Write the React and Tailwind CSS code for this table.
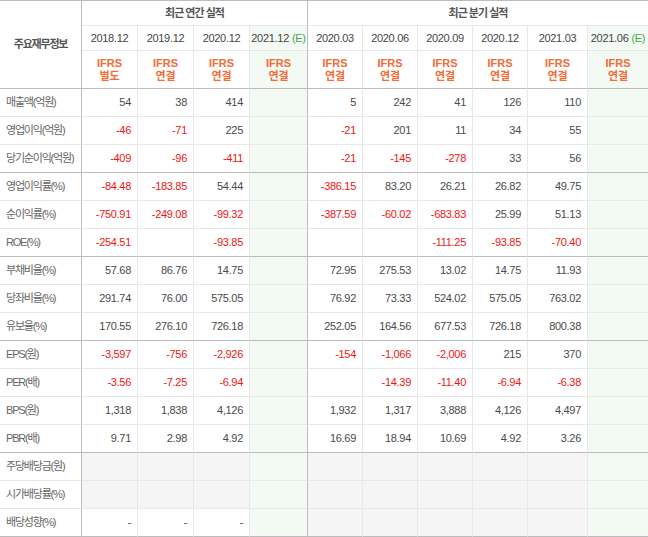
import React from 'react';

const annual = [
  { date: '2018.12', type: '별도' },
  { date: '2019.12', type: '연결' },
  { date: '2020.12', type: '연결' },
];
const quarter = ['2020.03', '2020.06', '2020.09', '2020.12', '2021.03'];

// a: 연간 3개, q: 분기 5개, end: 그룹 마지막 줄
const rows = [
  { label: '매출액(억원)', a: ['54', '38', '414'], q: ['5', '242', '41', '126', '110'] },
  { label: '영업이익(억원)', a: ['-46', '-71', '225'], q: ['-21', '201', '11', '34', '55'] },
  { label: '당기순이익(억원)', a: ['-409', '-96', '-411'], q: ['-21', '-145', '-278', '33', '56'], end: true },
  { label: '영업이익률(%)', a: ['-84.48', '-183.85', '54.44'], q: ['-386.15', '83.20', '26.21', '26.82', '49.75'] },
  { label: '순이익률(%)', a: ['-750.91', '-249.08', '-99.32'], q: ['-387.59', '-60.02', '-683.83', '25.99', '51.13'] },
  { label: 'ROE(%)', a: ['-254.51', '', '-93.85'], q: ['', '', '-111.25', '-93.85', '-70.40'], end: true },
  { label: '부채비율(%)', a: ['57.68', '86.76', '14.75'], q: ['72.95', '275.53', '13.02', '14.75', '11.93'] },
  { label: '당좌비율(%)', a: ['291.74', '76.00', '575.05'], q: ['76.92', '73.33', '524.02', '575.05', '763.02'] },
  { label: '유보율(%)', a: ['170.55', '276.10', '726.18'], q: ['252.05', '164.56', '677.53', '726.18', '800.38'], end: true },
  { label: 'EPS(원)', a: ['-3,597', '-756', '-2,926'], q: ['-154', '-1,066', '-2,006', '215', '370'] },
  { label: 'PER(배)', a: ['-3.56', '-7.25', '-6.94'], q: ['', '-14.39', '-11.40', '-6.94', '-6.38'] },
  { label: 'BPS(원)', a: ['1,318', '1,838', '4,126'], q: ['1,932', '1,317', '3,888', '4,126', '4,497'] },
  { label: 'PBR(배)', a: ['9.71', '2.98', '4.92'], q: ['16.69', '18.94', '10.69', '4.92', '3.26'], end: true },
  { label: '주당배당금(원)', a: [null, null, null], q: [null, null, null, null, null] },
  { label: '시가배당률(%)', a: [null, null, null], q: [null, null, null, null, null] },
  { label: '배당성향(%)', a: ['-', '-', '-'], q: [null, null, null, null, null], end: true },
];

const Num = ({ v, end }) => {
  const bg = v === null ? 'bg-[#f5f5f5]' : 'bg-white';
  const color = v && v.startsWith('-') && v !== '-' ? 'text-[#f01414]' : 'text-[#4a4a4a]';
  const bottom = end ? 'border-b-[#bcbcbc]' : 'border-b-[#e8e8e8]';
  return (
    <div className={`flex items-center justify-end pr-[6px] border-b border-r border-r-[#e8e8e8] tracking-[-0.3px] ${bg} ${color} ${bottom}`}>
      {v}
    </div>
  );
};

const Est = ({ end, thick }) => (
  <div
    className={`bg-[#f3f9f3] border-b ${end ? 'border-b-[#bcbcbc]' : 'border-b-[#e6ebe6]'} ${
      thick ? 'border-r border-r-[#bcbcbc]' : ''
    }`}
  />
);

const Ifrs = ({ type, thick, est, last }) => (
  <div
    className={`flex flex-col items-center justify-center leading-[13px] font-bold text-[#f26c33] border-b border-b-[#bcbcbc] ${
      last ? '' : thick ? 'border-r border-r-[#bcbcbc]' : 'border-r border-r-[#e8e8e8]'
    } ${est ? 'bg-[#f3f9f3]' : 'bg-white'}`}
  >
    <span>IFRS</span>
    <span>{type}</span>
  </div>
);

const DateCell = ({ date, thick, est, last }) => (
  <div
    className={`flex items-center justify-center tracking-[-0.3px] text-[#444] border-b border-b-[#e8e8e8] ${
      last ? '' : thick ? 'border-r border-r-[#bcbcbc]' : 'border-r border-r-[#e8e8e8]'
    } ${est ? 'bg-[#f3f9f3]' : 'bg-white'}`}
  >
    {date}
    {est && <span className="ml-[3px] text-[#3fa84e]">(E)</span>}
  </div>
);

export default function App() {
  return (
    <div className="w-[648px] h-[537px] bg-white border-t border-[#bcbcbc] text-[11px] font-['Liberation_Sans','Noto_Sans_CJK_KR',sans-serif]">
      <div className="grid grid-cols-[82px_56px_56px_56px_58px_55px_55px_55px_55px_60px_60px] grid-rows-[25px_25px_38px_repeat(16,28px)]">
        <div className="row-span-3 flex items-center justify-center font-bold text-[#555] tracking-[-1.2px] border-r border-b border-[#bcbcbc]">
          주요재무정보
        </div>
        <div className="col-span-4 flex items-center justify-center font-bold text-[#555] tracking-[-1px] border-b border-b-[#e8e8e8] border-r border-r-[#bcbcbc]">
          최근 연간 실적
        </div>
        <div className="col-span-6 flex items-center justify-center font-bold text-[#555] tracking-[-1px] border-b border-b-[#e8e8e8]">
          최근 분기 실적
        </div>

        {annual.map((c) => (
          <DateCell key={c.date} date={c.date} />
        ))}
        <DateCell date="2021.12" thick est />
        {quarter.map((d) => (
          <DateCell key={d} date={d} />
        ))}
        <DateCell date="2021.06" est last />

        {annual.map((c) => (
          <Ifrs key={c.date} type={c.type} />
        ))}
        <Ifrs type="연결" thick est />
        {quarter.map((d) => (
          <Ifrs key={d} type="연결" />
        ))}
        <Ifrs type="연결" est last />

        {rows.map((r) => (
          <React.Fragment key={r.label}>
            <div
              className={`flex items-center pl-[6px] tracking-[-1.2px] text-[#666] bg-white border-b border-r border-r-[#bcbcbc] ${
                r.end ? 'border-b-[#bcbcbc]' : 'border-b-[#e8e8e8]'
              }`}
            >
              {r.label}
            </div>
            {r.a.map((v, i) => (
              <Num key={'a' + i} v={v} end={r.end} />
            ))}
            <Est end={r.end} thick />
            {r.q.map((v, i) => (
              <Num key={'q' + i} v={v} end={r.end} />
            ))}
            <Est end={r.end} />
          </React.Fragment>
        ))}
      </div>
    </div>
  );
}
